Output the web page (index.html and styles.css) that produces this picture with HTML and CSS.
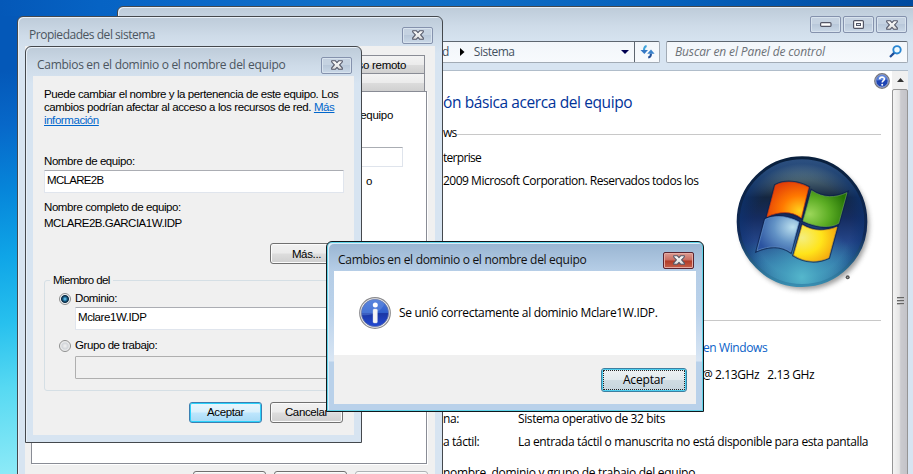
FILE: index.html
```
<!DOCTYPE html>
<html lang="es">
<head>
<meta charset="utf-8">
<title>Sistema</title>
<link rel="stylesheet" href="styles.css">
</head>
<body>
<svg class="defs" width="0" height="0">
  <defs>
    <linearGradient id="glyph" x1="0" y1="0" x2="0" y2="1"><stop offset="0" stop-color="#fff"/><stop offset="1" stop-color="#dcdcdc"/></linearGradient>
    <symbol id="x" viewBox="0 0 12 10"><path d="M.7.7H4.2L6 2.6 7.8.7H11.3V2L8.6 4.9 11.3 7.9V9.3H7.8L6 7.4 4.2 9.3H.7V7.9L3.4 4.9.7 2Z" fill="url(#glyph)" stroke="#535666" stroke-width="1.1" stroke-linejoin="round"/></symbol>
  </defs>
</svg>
<main class="desktop">

  <section class="win explorer">
    <header class="explorer-title">
      <span class="cap"><svg width="12" height="5"><rect x=".6" y=".6" width="10.4" height="3.8" rx="1" fill="#fff" stroke="#535666" stroke-width="1.2"/></svg></span>
      <span class="cap cap-mid"><svg width="11" height="9"><rect x=".6" y=".6" width="9.8" height="7.8" rx="1" fill="#fff" stroke="#535666" stroke-width="1.2"/><rect x="3.5" y="3.5" width="4" height="2" fill="#dde5ef" stroke="#535666"/></svg></span>
      <span class="cap"><svg width="12" height="10"><use href="#x"/></svg></span>
    </header>
    <nav class="toolbar">
      <div class="address">
        <span class="crumb-d">d</span>
        <svg class="arrow" width="5" height="8"><path d="M0 0 4.5 4 0 8Z" fill="#000"/></svg>
        <span class="crumb">Sistema</span>
        <svg class="drop" width="8" height="4"><path d="M0 0H8L4 4Z" fill="#000050"/></svg>
        <span class="refresh"><svg width="15" height="14" viewBox="0 0 15 14"><path d="M6.6 1C4.6 1.4 4 2.8 4 5.2" fill="none" stroke="#3ea3dc" stroke-width="2"/><path d="M.5 5H8L4.3 9Z" fill="#3478c4"/><path d="M8.2 12.6C10.2 12.2 11 11 11 8.6" fill="none" stroke="#224f97" stroke-width="2"/><path d="M7.2 8.7H14.6L11 4.5Z" fill="#3a83cc"/></svg></span>
      </div>
      <div class="search"><span>Buscar en el Panel de control</span>
        <svg width="13" height="13" viewBox="0 0 13 13"><path d="M5.4 7.6 1 12" stroke="#1d4c98" stroke-width="2.2"/><circle cx="8" cy="4.8" r="3.7" fill="#eefaff" stroke="#2a86d2" stroke-width="1.9"/></svg>
      </div>
    </nav>
    <div class="explorer-body">
      <div class="page">
        <div class="row heading"><span>ón básica acerca del equipo</span></div>
        <div class="row rule"><span class="t-ws">ws</span><i></i></div>
        <div class="edition">
          <div>
            <div class="row r24"><span class="t-ent">terprise</span></div>
            <div class="row r23"><span class="t-copy">2009 Microsoft Corporation. Reservados todos los</span></div>
          </div>
          <svg class="logo" width="144" height="144" viewBox="36 66 432 432">
            <defs>
              <linearGradient id="orb" x1="0" y1="0" x2="0" y2="1"><stop offset="0" stop-color="#7b98a8"/><stop offset=".13" stop-color="#57737f"/><stop offset=".31" stop-color="#142640"/><stop offset=".47" stop-color="#152c60"/><stop offset=".65" stop-color="#244588"/><stop offset=".82" stop-color="#347baa"/><stop offset="1" stop-color="#54b4c9"/></linearGradient>
              <radialGradient id="edge" cx=".5" cy=".55" r=".5"><stop offset=".75" stop-color="#0b2f70" stop-opacity="0"/><stop offset="1" stop-color="#0c3270" stop-opacity=".7"/></radialGradient>
              <radialGradient id="base" cx=".5" cy=".94" r=".45"><stop offset="0" stop-color="#55b7cc"/><stop offset=".3" stop-color="#45a0bf" stop-opacity=".8"/><stop offset="1" stop-color="#3a80b0" stop-opacity="0"/></radialGradient>
              <linearGradient id="rim" x1="0" y1="0" x2="0" y2="1"><stop offset="0" stop-color="#09203d"/><stop offset=".6" stop-color="#102957"/><stop offset="1" stop-color="#388db0"/></linearGradient>
              <radialGradient id="red" cx=".78" cy=".8" r=".85"><stop offset="0" stop-color="#ffd21c"/><stop offset=".5" stop-color="#ff7900"/><stop offset="1" stop-color="#e34008"/></radialGradient>
              <radialGradient id="green" cx=".15" cy=".65" r=".9"><stop offset="0" stop-color="#9cd75a"/><stop offset=".5" stop-color="#5cad24"/><stop offset="1" stop-color="#247206"/></radialGradient>
              <radialGradient id="blue" cx=".85" cy=".3" r=".9"><stop offset="0" stop-color="#bce0ef"/><stop offset=".5" stop-color="#6292c5"/><stop offset="1" stop-color="#2b53a0"/></radialGradient>
              <radialGradient id="yellow" cx=".2" cy=".35" r=".9"><stop offset="0" stop-color="#f4ee80"/><stop offset=".5" stop-color="#ffe41a"/><stop offset="1" stop-color="#f2990c"/></radialGradient>
              <filter id="soft" x="-20%" y="-20%" width="140%" height="140%"><feGaussianBlur stdDeviation="8"/></filter>
            </defs>
            <circle cx="254" cy="286" r="193" fill="#666" opacity=".65" filter="url(#soft)"/>
            <circle cx="246" cy="275" r="193" fill="url(#orb)"/>
            <circle cx="246" cy="275" r="193" fill="url(#edge)"/>
            <circle cx="246" cy="275" r="190" fill="url(#base)"/>
            <circle cx="246" cy="275" r="191.500" fill="none" stroke="url(#rim)" stroke-width="9"/>
            <path d="M166 166C195 150 236 155 266 172L244 264C215 243 180 243 141 260ZM275 182C310 205 345 205 381 188L356 280C330 295 290 292 249 273ZM136 268C165 254 205 258 237 276L212 366C185 347 150 345 111 362ZM247 285C280 305 315 305 351 291L326 383C295 398 255 398 221 376Z" fill="none" stroke="#0b204c" stroke-width="9" opacity=".7"/>
            <path d="M166 166C195 150 236 155 266 172L244 264C215 243 180 243 141 260Z" fill="url(#red)" stroke="#d63a0b" stroke-width="2"/>
            <path d="M275 182C310 205 345 205 381 188L356 280C330 295 290 292 249 273Z" fill="url(#green)" stroke="#68a649" stroke-width="2"/>
            <path d="M136 268C165 254 205 258 237 276L212 366C185 347 150 345 111 362Z" fill="url(#blue)" stroke="#6595cf" stroke-width="2"/>
            <path d="M247 285C280 305 315 305 351 291L326 383C295 398 255 398 221 376Z" fill="url(#yellow)" stroke="#dda51f" stroke-width="2"/>
            <circle cx="383" cy="442" r="6" fill="#555"/><circle cx="383" cy="442" r="2" fill="#bbb"/>
          </svg>
        </div>
        <div class="row rule rule-2"><i></i></div>
        <div class="row r24 rating"><span class="t-win">en Windows</span></div>
        <div class="row r24 cpu"><span class="t-cpu">@ 2.13GHz &nbsp; 2.13 GHz</span></div>
        <div class="row r23 sys"><span class="label t-na">na:</span><span class="t-so">Sistema operativo de 32 bits</span></div>
        <div class="row r23"><span class="label t-tac">a táctil:</span><span class="t-pen">La entrada táctil o manuscrita no está disponible para esta pantalla</span></div>
        <div class="row r24 names"><span class="t-names">nombre, dominio y grupo de trabajo del equipo</span></div>
      </div>
      <div class="help"><svg width="16" height="16" viewBox="0 0 16 16"><circle cx="8" cy="8" r="7.200" fill="#1f45b4" stroke="#77777d" stroke-width="1.400"/><circle cx="8" cy="8" r="6.200" fill="none" stroke="#c4cbe2" stroke-width=".8"/><path d="M3 7.500A5 5 0 0 1 13 6.500Z" fill="#5d86df"/><path d="M5.700 6.200C5.700 3.400 10.400 3.500 10.400 6 10.400 7.700 8.200 7.700 8.200 9.600" fill="none" stroke="#fff" stroke-width="1.600"/><circle cx="8.200" cy="11.800" r="1" fill="#fff"/></svg></div>
      <div class="scroll">
        <div class="scroll-up"><svg width="7" height="4"><path d="M0 4H7L3.500 0Z" fill="#333"/></svg></div>
        <div class="thumb"><b></b><b></b><b></b></div>
      </div>
    </div>
  </section>

  <section class="win props">
    <header class="title"><span class="t-props">Propiedades del sistema</span><span class="cap"><svg width="12" height="10"><use href="#x"/></svg></span></header>
    <div class="client props-client">
      <div class="tab tab-1"><span>so remoto</span></div>
      <div class="tab tab-2"></div>
      <div class="sheet">
        <div class="sheet-line eq"><span>equipo</span></div>
        <div class="sheet-field"></div>
        <div class="sheet-line o"><span>o</span></div>
      </div>
      <div class="props-buttons"><span class="btn"></span><span class="btn"></span><span class="btn faded"></span></div>
    </div>
  </section>

  <section class="win rename">
    <header class="title"><span class="t-ren">Cambios en el dominio o el nombre del equipo</span><span class="cap"><svg width="12" height="10"><use href="#x"/></svg></span></header>
    <div class="client rename-client">
      <p class="intro"><span class="i1">Puede cambiar el nombre y la pertenencia de este equipo. Los</span><br><span class="i2">cambios podrían afectar al acceso a los recursos de red. <a>Más</a></span><br><a class="i3">información</a></p>
      <div class="lbl l-name"><span>Nombre de equipo:</span></div>
      <div class="field"><span class="f-name">MCLARE2B</span></div>
      <div class="lbl l-full"><span>Nombre completo de equipo:</span></div>
      <div class="lbl l-value"><span>MCLARE2B.GARCIA1W.IDP</span></div>
      <div class="more"><span class="btn"><span>Más...</span></span></div>
      <fieldset>
        <legend>Miembro del</legend>
        <div class="radio r-on"><i class="dot on"></i><span>Dominio:</span></div>
        <div class="field in"><span class="f-dom">Mclare1W.IDP</span></div>
        <div class="radio r-off"><i class="dot"></i><span>Grupo de trabajo:</span></div>
        <div class="field in off"></div>
      </fieldset>
      <div class="actions"><span class="btn default"><span>Aceptar</span></span><span class="btn"><span>Cancelar</span></span></div>
    </div>
  </section>

  <section class="win alert">
    <header class="title"><span class="t-alert">Cambios en el dominio o el nombre del equipo</span><span class="cap red"><svg width="12" height="10"><use href="#x"/></svg></span></header>
    <div class="client alert-client">
      <div class="message">
        <svg width="32" height="32" viewBox="0 0 32 32"><defs><linearGradient id="inf" x1="0" y1="0" x2="0" y2="1"><stop offset="0" stop-color="#4b78d8"/><stop offset=".48" stop-color="#2f5fcd"/><stop offset=".52" stop-color="#1a37a5"/><stop offset="1" stop-color="#244bd4"/></linearGradient></defs><circle cx="16" cy="16" r="15.300" fill="#f4f4f4" stroke="#8a8a8e" stroke-width="1.200"/><circle cx="16" cy="16" r="13.700" fill="url(#inf)" stroke="#777fa0" stroke-width=".7"/><path d="M3 18C12 19 22 16 25.500 6.500A13.300 13.300 0 0 0 3 18Z" fill="#6f98e6" opacity=".4"/><circle cx="16.300" cy="8" r="2.500" fill="#fff"/><rect x="14" y="12" width="4.400" height="14" rx="1.200" fill="#f5f5f5" stroke="#ccd3e6" stroke-width=".4"/></svg>
        <span>Se unió correctamente al dominio Mclare1W.IDP.</span>
      </div>
      <div class="alert-foot"><span class="ok"><span>Aceptar</span></span></div>
    </div>
  </section>
</main>
</body>
</html>
```
FILE: styles.css
```
* { box-sizing: border-box; }
body { margin: 0; overflow: hidden; }
.defs { position: absolute; }
svg { display: block; flex: none; }

.desktop {
  position: relative;
  width: 913px;
  height: 474px;
  overflow: hidden;
  font: 12px/16px "Open Sans", "Noto Sans", sans-serif;
  color: #000;
  white-space: nowrap;
  background:
    linear-gradient(90deg, #0458b8 0, #0663c4 100px, #0a68c8 200px, #1070c8 350px, #0e6cc5 480px, #0560bb 680px, #004a9f 913px) 0 0 / 100% 16px no-repeat,
    linear-gradient(172deg, #0458b8 0, #0458b8 70px, #0768c9 125px, #0686da 190px, #0fa5e7 255px, #27c0ee 320px, #57d9f2 385px, #8ceaf7 470px);
}

/* Window frames */
.win {
  position: absolute;
  display: flex;
  flex-direction: column;
  border: 1px solid #44484d;
  border-radius: 6px 6px 0 0;
  background: linear-gradient(#bdcbd9 0, #cfdce9 20px, #d7e4f1 36px);
  box-shadow: inset 1px 1px 0 #e8f0f8;
}
.explorer { left: 117px; top: 6px; width: 803px; height: 480px; }
.props { left: 17px; top: 16px; width: 426px; height: 480px; }
.rename { left: 25px; top: 46px; width: 337px; height: 397px; }
.alert {
  left: 326px; top: 241px; width: 378px; height: 171px;
  border-color: #10171c;
  background: linear-gradient(#98b4d1 0, #b5cde6 28px, #bad2eb 70px, #d9e6f4 119px, #b9d1ea 120px);
  box-shadow: inset 0 0 0 1px #5fd3e8, inset 2px 2px 0 #dcebf7;
}
.title {
  display: flex;
  align-items: center;
  justify-content: space-between;
  height: 29px;
  padding: 7px 9px 0 11px;
  color: #4b5560;
  letter-spacing: -.3px;
}
.t-props { letter-spacing: -.47px; }
.alert .title { color: #111; }
.client { margin: 0 7px 7px; flex: 1; background: #f0f0f0; font-family: "Liberation Sans", sans-serif; font-size: 11.5px; line-height: 13px; letter-spacing: -.42px; }
.cap {
  display: flex;
  align-items: center;
  justify-content: center;
  width: 31px;
  height: 17px;
  border: 1px solid #8592ad;
  border-radius: 2px;
  background: linear-gradient(#c5d2e1 45%, #b9c8da 50%, #cad8e7);
  box-shadow: inset 0 0 0 1px #d8e3ee;
}
.cap.red { border-color: #5a2430; background: linear-gradient(#dc9b92 0, #c86b5f 48%, #b13a26 52%, #c5604a); box-shadow: inset 0 0 0 1px #e5aaa2; }

/* Explorer */
.explorer-title { display: flex; justify-content: flex-end; gap: 2px; height: 34px; padding: 9px 12px 0 0; }
.toolbar { display: flex; gap: 6px; height: 22px; margin: 0 11px 0 32px; color: #44515f; }
.address, .search {
  display: flex;
  align-items: center;
  border: 1px solid #a2abb5;
  border-top-color: #5d6670;
  border-radius: 2px;
  background: linear-gradient(#f2f6fa, #f7fafd);
}
.address { flex: 1; padding-left: 291px; letter-spacing: -.5px; }
.arrow { margin-left: 11px; }
.crumb { margin-left: 9px; }
.drop { margin-left: auto; margin-right: 5px; }
.refresh { display: flex; align-items: center; justify-content: center; align-self: stretch; width: 25px; border-left: 1px solid #5d6670; }
.search { justify-content: space-between; width: 242px; padding: 0 5px 0 8px; font-style: italic; color: #6d7278; letter-spacing: -.13px; }
.explorer-body { display: flex; margin: 7px 11px 0 7px; height: 420px; border-top: 1px solid #b0bdca; background: #fff; }
.page { width: 756px; padding: 12px 0 0 318px; letter-spacing: -.4px; }
.row { display: flex; align-items: center; }
.heading { height: 38px; font-size: 15.5px; color: #003399; letter-spacing: -.4px; }
.rule { height: 25px; gap: 2px; }
.rule i { flex: 1; height: 1px; background: #c8c8c8; margin-top: 2px; }
.t-ws { width: 12px; letter-spacing: -.9px; }
.t-ent { letter-spacing: -.7px; }
.t-copy { letter-spacing: -.49px; }
.t-pen { letter-spacing: -.37px; }
.t-names { letter-spacing: -.3px; }
.r24 { height: 24px; }
.r23 { height: 23px; }
.edition { display: flex; justify-content: space-between; height: 164px; }
.edition > div { width: 280px; }
.logo { margin: 6px 5px 0 0; }
.rule-2 { height: 21px; }
.rule-2 i { margin-top: 1px; }
.rating { margin: 5px 0 3px; padding-left: 260px; color: #0a5fc8; }
.cpu { padding-left: 259px; }
.sys { margin-top: 21px; }
.label { flex: none; width: 75px; }
.names { margin-top: 7px; margin-right: -40px; }
.help { width: 20px; padding: 2px 0 0 1px; margin-left: -8px; margin-right: -1px; }
.scroll { display: flex; flex-direction: column; width: 16px; margin-left: auto; background: #f0f0f0; }
.scroll-up { display: flex; align-items: center; justify-content: center; height: 18px; }
.thumb {
  flex: 1;
  display: flex;
  flex-direction: column;
  align-items: center;
  gap: 1px;
  padding-top: 207px;
  border: 1px solid #959595;
  border-radius: 2px 2px 0 0;
  background: linear-gradient(90deg, #f4f4f4 0, #e6e6e6 45%, #cbcbcf 55%, #c3c3c8);
}
.thumb b { width: 7px; height: 2px; background: #666; border-bottom: 1px solid #bbb; }

/* System properties */
.props-client { display: flex; flex-direction: column; margin-bottom: 0; padding: 9px 8px 0 6px; }
.tab { display: flex; align-items: center; justify-content: flex-end; align-self: stretch; height: 18px; margin-right: 2px; border: 1px solid #898c95; border-bottom: 0; background: linear-gradient(#f3f3f3 0, #ebebeb 50%, #dcdcdc 52%, #d0d0d0); }
.tab-1 { padding: 1px 18px 0 0; letter-spacing: -.3px; }
.sheet { height: 373px; border: 1px solid #898c95; background: #fff; box-shadow: 1px 1px 0 #fff; }
.sheet-line { display: flex; justify-content: flex-end; }
.eq { padding: 17px 33px 0 0; height: 55px; letter-spacing: -.3px; }
.sheet-field { height: 20px; width: 200px; margin: 0 23px 0 auto; border: 1px solid #dfe4ec; border-top-color: #aaadb3; }
.o { padding: 8px 54px 0 0; }
.props-buttons { display: flex; justify-content: flex-end; gap: 8px; margin: 7px -1px 0 0; }
.btn {
  display: flex;
  align-items: center;
  justify-content: center;
  width: 73px;
  height: 21px;
  border: 1px solid #707070;
  border-radius: 3px;
  background: linear-gradient(#f2f2f2 0, #ebebeb 48%, #dddddd 52%, #cfcfcf);
  box-shadow: inset 0 0 0 1px #fbfbfb;
  letter-spacing: -.35px;
}
.btn.faded { border-color: #adb2b5; background: #f4f4f4; }

/* Computer name dialog */
.rename-client { padding: 12px 10px 0; }
.intro { height: 39px; margin: 0; padding-left: 1px; }
.i2 { letter-spacing: -.39px; }
a { color: #0066cc; text-decoration: underline; }
.lbl { display: flex; padding-left: 1px; }
.l-name { margin-top: 28px; }
.field { display: flex; align-items: center; height: 23px; padding: 0 2px 2px; border: 1px solid #e0e5ed; border-top-color: #abadb3; border-radius: 1px; background: #fff; }
.f-name { letter-spacing: -.7px; }
.l-name + .field { margin: 2px 0 8px 1px; }
.l-value { margin-top: 3px; letter-spacing: -.5px; }
.more { display: flex; justify-content: flex-end; margin: 13px 1px 0 0; }
.more .btn { padding-top: 1px; }
fieldset { min-width: 0; height: 118px; margin: 9px 0 0 1px; padding: 0 15px 0 14px; border: 1px solid #d5dfe5; border-radius: 3px; }
legend { padding: 0 3px; margin-left: -9px; line-height: 14px; letter-spacing: -.6px; }
.radio { display: flex; align-items: center; gap: 4px; height: 13px; }
.r-on { margin-top: 5px; }
.r-off { margin-top: 9px; }
.dot { flex: none; width: 12px; height: 12px; border: 1px solid #8e8f8f; border-radius: 50%; background: radial-gradient(circle at 50% 50%, #f2f2f2 0, #d3d6da 3px, #f4f4f4 5px); }
.dot.on { background: radial-gradient(circle at 50% 50%, #8fdcff 0, #2c86b5 1.5px, #10344f 3px, #10344f 3.6px, #f4f4f4 4.4px); }
.field.in { margin: 2px 0 0 16px; }
.field.off { margin-top: 4px; border-color: #afafaf; background: #f0f0f0; }
.actions { display: flex; justify-content: flex-end; gap: 8px; margin: 11px 1px 0 0; }
.btn.default { border-color: #3c7fb1; background: linear-gradient(#eaf6fd 0, #d9f0fc 48%, #bee6fd 52%, #a7d9f5); box-shadow: inset 0 0 0 1px #2bd2fb; }

/* Confirmation */
.alert-client { font: 12px/16px "Open Sans", sans-serif; letter-spacing: -.33px; }
.message { display: flex; align-items: center; gap: 8px; height: 84px; padding-left: 25px; background: #fff; }
.alert-foot { display: flex; justify-content: flex-end; padding: 13px 9px 0 0; }
.ok {
  display: flex;
  align-items: center;
  justify-content: center;
  width: 86px;
  height: 24px;
  border: 1px solid #3c7fa1;
  border-radius: 3px;
  background: linear-gradient(#eef2f4 0, #e2eaee 48%, #cfdce2 52%, #c6d5dd);
  box-shadow: inset 0 0 0 1px #4fd0f0;
  outline: 1px dotted #222;
  outline-offset: -3px;
  letter-spacing: -.15px;
}
```
